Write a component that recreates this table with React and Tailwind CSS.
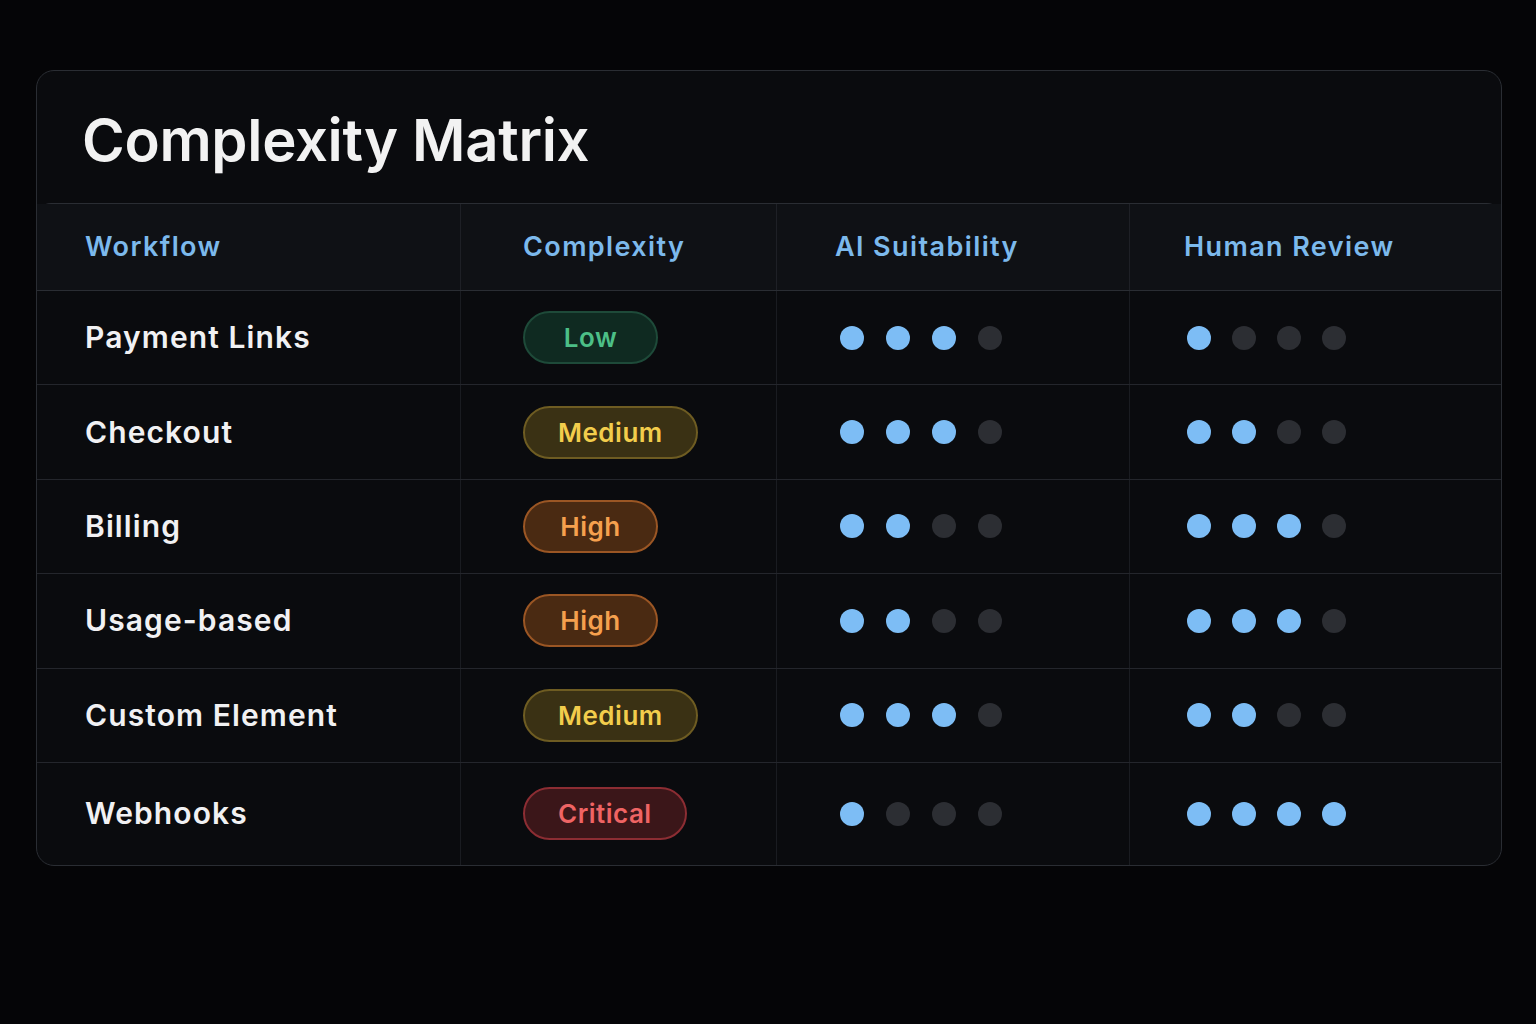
import React from "react";

const rows = [
  { name: "Payment Links", level: "Low", ai: 3, human: 1 },
  { name: "Checkout", level: "Medium", ai: 3, human: 2 },
  { name: "Billing", level: "High", ai: 2, human: 3 },
  { name: "Usage-based", level: "High", ai: 2, human: 3 },
  { name: "Custom Element", level: "Medium", ai: 3, human: 2 },
  { name: "Webhooks", level: "Critical", ai: 1, human: 4 },
];

const badgeStyles = {
  Low: "bg-[#0f2a21] border-[#1e4a39] text-[#4cbf87]",
  Medium: "bg-[#3a3114] border-[#6e5c22] text-[#f2cd4c]",
  High: "bg-[#4a2a12] border-[#9b5624] text-[#f5a04e]",
  Critical: "bg-[#3b1619] border-[#8c2d33] text-[#ef6464]",
};

const Badge = ({ level }) => (
  <span
    className={`inline-flex h-[53px] min-w-[135px] items-center justify-center rounded-full border-2 px-[33px] text-[26px] font-semibold tracking-[0.5px] ${badgeStyles[level]}`}
  >
    {level}
  </span>
);

const Dots = ({ filled, gap }) => (
  <div className={`flex items-center ${gap}`}>
    {[0, 1, 2, 3].map((i) => (
      <span
        key={i}
        className={`h-[24px] w-[24px] rounded-full ${i < filled ? "bg-[#7dbdf5]" : "bg-[#2c2e33]"}`}
      />
    ))}
  </div>
);

const cols = "grid grid-cols-[424px_316px_353px_1fr]";

export default function App() {
  return (
    <div
      className="min-h-screen w-full bg-[#050507] pt-[70px] pl-[36px] pr-[34px]"
      style={{ fontFamily: "Inter, 'Noto Sans', sans-serif" }}
    >
      <div className="rounded-[18px] border border-[#2a2d33] bg-[#0a0b0e] overflow-hidden">
        <h1 className="px-[45px] pt-[34px] pb-[28px] text-[58px] font-semibold leading-[70px] tracking-[-0.3px] text-[#f2f2f2]">
          Complexity Matrix
        </h1>

        <div className="rounded-t-[14px] border-t border-[#2a2d33]">
          <div className={`${cols} h-[87px] bg-[#0f1115] border-b border-[#2a2d33] text-[27px] font-semibold tracking-[1.4px] text-[#7cb9ec]`}>
            <div className="flex items-center pl-[48px] border-r border-[#1e2026]">Workflow</div>
            <div className="flex items-center pl-[62px] border-r border-[#1e2026]">Complexity</div>
            <div className="flex items-center pl-[58px] border-r border-[#1e2026]">AI Suitability</div>
            <div className="flex items-center pl-[54px]">Human Review</div>
          </div>

          {rows.map((row, idx) => (
            <div
              key={row.name}
              className={`${cols} ${idx === rows.length - 1 ? "h-[102px]" : "h-[94.4px] border-b border-[#24262c]"}`}
            >
              <div className="flex items-center pl-[48px] border-r border-[#1a1c21] text-[30px] font-semibold tracking-[1.1px] text-[#f1f1f3]">
                {row.name}
              </div>
              <div className="flex items-center pl-[62px] border-r border-[#1a1c21]">
                <Badge level={row.level} />
              </div>
              <div className="flex items-center pl-[63px] border-r border-[#1a1c21]">
                <Dots filled={row.ai} gap="gap-[22px]" />
              </div>
              <div className="flex items-center pl-[57px]">
                <Dots filled={row.human} gap="gap-[21px]" />
              </div>
            </div>
          ))}
        </div>
      </div>
    </div>
  );
}
